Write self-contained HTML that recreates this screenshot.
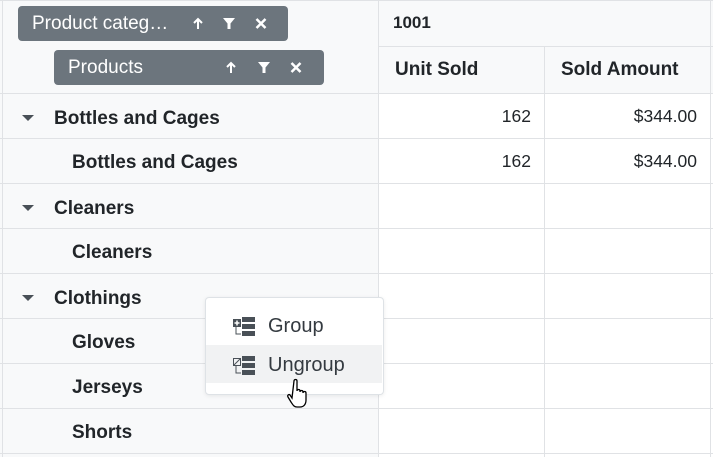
<!DOCTYPE html><html><head><style>
html,body{margin:0;width:713px;height:457px;overflow:hidden}
body{background:#fff;font-family:"Liberation Sans",sans-serif;position:relative}
.a{position:absolute}
.hl{position:absolute;left:0;width:713px;height:1px;background:#e0e2e5}
.vl{position:absolute;top:0;height:457px;width:1px;background:#e0e2e5}
.t{position:absolute;font-size:19px;font-weight:bold;color:#212529}
.n{position:absolute;font-size:17.5px;color:#212529;text-align:right}
.pill{position:absolute;background:#6c757d;border-radius:4px;color:#fff;font-size:19px;height:35px;line-height:35px;box-sizing:border-box;padding-left:14px}
.ic{position:absolute;top:11px}
.car{position:absolute;width:0;height:0;border-left:6px solid transparent;border-right:6px solid transparent;border-top:6px solid #495057}
</style></head><body>
<div class="a" style="left:0;top:0;width:378px;height:457px;background:#f8f9fa"></div>
<div class="a" style="left:378px;top:0;width:335px;height:93px;background:#f8f9fa"></div>
<div class="hl" style="top:0"></div>
<div class="hl" style="top:46px;left:378px;width:335px"></div>
<div class="hl" style="top:93px"></div>
<div class="hl" style="top:138px"></div>
<div class="hl" style="top:183px"></div>
<div class="hl" style="top:228px"></div>
<div class="hl" style="top:273px"></div>
<div class="hl" style="top:318px"></div>
<div class="hl" style="top:363px"></div>
<div class="hl" style="top:408px"></div>
<div class="hl" style="top:453px"></div>
<div class="vl" style="left:2px"></div>
<div class="vl" style="left:378px"></div>
<div class="vl" style="left:544px;top:46px;height:411px"></div>
<div class="vl" style="left:710px"></div>
<div class="pill" style="left:18px;top:6px;width:270px">Product categ…
<svg class="ic" style="left:174px" width="12" height="13" viewBox="0 0 12 13"><path d="M6 12V2M2 6l4-4 4 4" stroke="#fff" stroke-width="2" fill="none"/></svg>
<svg class="ic" style="left:205px" width="12" height="13" viewBox="0 0 12 13"><path d="M0 1h12L7.5 6.5V12h-3V6.5z" fill="#fff"/></svg>
<svg class="ic" style="left:237px" width="12" height="13" viewBox="0 0 12 13"><path d="M1.5 2l9 9M10.5 2l-9 9" stroke="#fff" stroke-width="2.5"/></svg></div>
<div class="pill" style="left:54px;top:50px;width:270px">Products
<svg class="ic" style="left:171px" width="12" height="13" viewBox="0 0 12 13"><path d="M6 12V2M2 6l4-4 4 4" stroke="#fff" stroke-width="2" fill="none"/></svg>
<svg class="ic" style="left:204px" width="12" height="13" viewBox="0 0 12 13"><path d="M0 1h12L7.5 6.5V12h-3V6.5z" fill="#fff"/></svg>
<svg class="ic" style="left:236px" width="12" height="13" viewBox="0 0 12 13"><path d="M1.5 2l9 9M10.5 2l-9 9" stroke="#fff" stroke-width="2.5"/></svg></div>
<div class="t" style="left:393px;top:13px;font-size:17px">1001</div>
<div class="t" style="left:395px;top:59px">Unit Sold</div>
<div class="t" style="left:561px;top:59px">Sold Amount</div>
<div class="car" style="left:22px;top:115px"></div>
<div class="t" style="left:54px;top:108px">Bottles and Cages</div>
<div class="t" style="left:72px;top:152px">Bottles and Cages</div>
<div class="car" style="left:22px;top:205px"></div>
<div class="t" style="left:54px;top:198px">Cleaners</div>
<div class="t" style="left:72px;top:242px">Cleaners</div>
<div class="car" style="left:22px;top:295px"></div>
<div class="t" style="left:54px;top:288px">Clothings</div>
<div class="t" style="left:72px;top:332px">Gloves</div>
<div class="t" style="left:72px;top:377px">Jerseys</div>
<div class="t" style="left:72px;top:422px">Shorts</div>
<div class="n" style="left:400px;width:131px;top:106px">162</div>
<div class="n" style="left:560px;width:137px;top:106px">$344.00</div>
<div class="n" style="left:400px;width:131px;top:151px">162</div>
<div class="n" style="left:560px;width:137px;top:151px">$344.00</div>
<div class="a" style="left:205px;top:297px;width:177px;height:96px;background:#fff;border:1px solid #dee2e6;border-radius:4px;box-shadow:0 1px 4px rgba(0,0,0,.08)"></div>
<div class="a" style="left:206px;top:345px;width:176px;height:38px;background:#f1f2f3"></div>
<svg class="a" style="left:233px;top:316px" width="24" height="22" viewBox="0 0 24 22"><rect x="0" y="3" width="8" height="8" fill="#495057"/><path d="M4 4.5v5M1.5 7h5" stroke="#fff" stroke-width="1.5"/><path d="M3 11v7h5" stroke="#495057" fill="none"/><rect x="9" y="1" width="13" height="5" fill="#495057"/><rect x="9" y="8" width="13" height="5" fill="#495057"/><rect x="9" y="15" width="13" height="5" fill="#495057"/></svg>
<svg class="a" style="left:233px;top:355px" width="24" height="22" viewBox="0 0 24 22"><rect x="0.5" y="3.5" width="7" height="7" fill="none" stroke="#495057"/><path d="M1 10l6-6" stroke="#495057"/><path d="M3 11v7h5" stroke="#495057" fill="none"/><rect x="9" y="1" width="13" height="5" fill="#495057"/><rect x="9" y="8" width="13" height="5" fill="#495057"/><rect x="9" y="15" width="13" height="5" fill="#495057"/></svg>
<div class="a" style="left:268px;top:315px;font-size:20px;color:#343a40">Group</div>
<div class="a" style="left:268px;top:354px;font-size:20px;color:#343a40">Ungroup</div>
<svg class="a" style="left:286px;top:378px" width="30" height="32" viewBox="0 0 30 32"><path d="M8 3c0-2 3-2 3 0v10c0-2 3-2 3 0v1c0-2 3-2 3 0v1c0-2 3-2 3 0v7c0 4-2 7-6 7h-3c-3 0-4-2-6-5l-3-5c-1-2 1-3 2-2l2 3z" fill="#fff" stroke="#000" stroke-width="1.3"/></svg>
</body></html>
